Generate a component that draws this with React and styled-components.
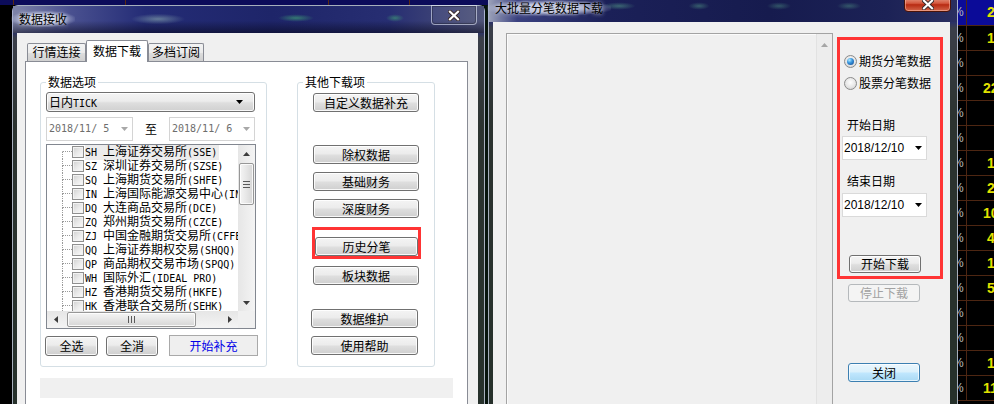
import React from "react";
import styled, { createGlobalStyle, css } from "styled-components";

const UI = `"Noto Sans CJK SC", "Liberation Sans", sans-serif`;
const MONO = `"DejaVu Sans Mono", "Liberation Mono", "Noto Sans CJK SC", monospace`;
const SANS = `"Liberation Sans", Arial, sans-serif`;

const GlobalStyle = createGlobalStyle`
  *, *::before, *::after { box-sizing: border-box; }
  html, body { margin: 0; padding: 0; background: #000; }
  body { width: 994px; height: 404px; overflow: hidden; font: 12px/16px ${UI}; color: #000; }
  #root { width: 994px; height: 404px; }
`;

/* ---------- background application ---------- */
const Desktop = styled.div`
  position: relative;
  width: 994px;
  height: 404px;
  overflow: hidden;
  display: flex;
  background: #000;
`;
const BackScreen = styled.div`
  flex: 1;
  display: flex;
  flex-direction: column;
  background: linear-gradient(90deg, #000 0 470px, #07140d 470px 490px, #000 490px);
`;
const TopBand = styled.div`
  height: 5px;
  background:
    linear-gradient(90deg, transparent 13px, #5a2a12 13px 14px, transparent 14px 125px, #5a2a12 125px 126px, transparent 126px 328px, #5a2a12 328px 329px, transparent 329px 409px, #5a2a12 409px 410px, transparent 410px),
    #0c0c5a;
`;
const Ticker = styled.div`
  width: 36px;
  display: flex;
  flex-direction: column;
  background: #000;
`;
const TickRow = styled.div`
  flex: none;
  height: ${(p) => (p.$first ? 26 : 25)}px;
  display: flex;
  border-bottom: 1px solid #4d2612;
  background: ${(p) => (p.$first ? "#0b0b98" : "#000")};
`;
const TickPct = styled.div`
  width: 9px;
  overflow: hidden;
  border-right: 1px solid #4d2612;
  color: #bdbdbd;
  font: 12px/24px ${SANS};
  white-space: nowrap;
  text-indent: -5px;
`;
const TickVal = styled.div`
  flex: 1;
  overflow: hidden;
  padding-left: 16px;
  color: #e2e200;
  font: bold 14px/24px ${SANS};
  white-space: pre;
`;

/* ---------- windows ---------- */
const Win = styled.div`
  position: absolute;
  left: ${(p) => p.$x}px;
  top: ${(p) => p.$y}px;
  width: ${(p) => p.$w}px;
  height: 440px;
  display: flex;
  flex-direction: column;
  padding: 0 ${(p) => p.$pr}px 0 ${(p) => p.$pl}px;
  border: 1px solid rgba(210, 218, 238, 0.75);
  border-radius: 6px 6px 0 0;
  background: linear-gradient(180deg, #3c4380 0, #2a3068 26px, #3b3f4a 32px, #2c3330 120px, #25302a 100%);
`;
const TitleBar = styled.div`
  flex: none;
  height: ${(p) => p.$h}px;
  display: flex;
  align-items: flex-start;
  margin: 0 -${(p) => p.$pr}px 0 -${(p) => p.$pl}px;
  padding: 0 ${(p) => p.$pr}px 0 ${(p) => p.$pl}px;
  background: ${(p) => p.$bg};
`;
const Title = styled.div`
  margin: ${(p) => p.$mt}px 0 0 -6px;
  padding: 0 8px;
  font: 12px/16px ${UI};
  color: #000;
  white-space: nowrap;
  background: radial-gradient(ellipse at center, rgba(205, 212, 236, 0.85) 35%, rgba(205, 212, 236, 0) 75%);
  text-shadow: 0 0 4px rgba(255, 255, 255, 0.9);
`;
const CloseBtn = styled.div`
  margin: ${(p) => p.$mt}px ${(p) => p.$mr}px 0 auto;
  width: ${(p) => p.$w}px;
  height: ${(p) => p.$h}px;
  display: flex;
  align-items: center;
  justify-content: center;
  border-radius: 0 0 4px 4px;
  ${(p) =>
    p.$red
      ? css`
          border: 1px solid #4a1208;
          background: linear-gradient(180deg, #e8a48f 0%, #d4583e 45%, #b82b12 55%, #d3664a 100%);
          box-shadow: inset 0 0 0 1px rgba(255, 200, 180, 0.5);
        `
      : css`
          border: 1px solid rgba(235, 240, 255, 0.55);
          background: rgba(255, 255, 255, 0.06);
          box-shadow: inset 0 0 0 1px rgba(0, 0, 0, 0.25);
        `}
`;
const Client = styled.div`
  flex: 1;
  display: flex;
  flex-direction: ${(p) => p.$dir || "column"};
  padding: ${(p) => p.$pad};
  background: #f0f0f0;
  min-height: 0;
`;

/* ---------- tabs ---------- */
const TabRow = styled.div`
  flex: none;
  height: 21px;
  display: flex;
  align-items: flex-end;
  padding-left: 2px;
`;
const Tab = styled.div`
  width: ${(p) => p.$w}px;
  height: ${(p) => (p.$active ? 22 : 18)}px;
  margin-bottom: ${(p) => (p.$active ? -1 : 0)}px;
  position: relative;
  z-index: ${(p) => (p.$active ? 1 : 0)};
  border: 1px solid #898c95;
  border-bottom: none;
  border-radius: 2px 2px 0 0;
  text-align: center;
  font: 12px/${(p) => (p.$active ? 19 : 16)}px ${UI};
  background: ${(p) =>
    p.$active ? "#fff" : "linear-gradient(180deg, #f3f3f3 0%, #ebebeb 50%, #dedede 51%, #d0d0d0 100%)"};
`;
const TabPanel = styled.div`
  width: 443px;
  flex: 1;
  display: flex;
  flex-direction: column;
  padding-left: 14px;
  background: #fff;
  border: 1px solid #898c95;
`;
const GroupRow = styled.div`
  display: flex;
  gap: 30px;
  margin-top: 13px;
  align-items: flex-start;
`;
const Group = styled.fieldset`
  width: ${(p) => p.$w}px;
  height: 292px;
  margin: 0;
  padding: 0;
  min-width: 0;
  border: 1px solid #d5dfe5;
  border-radius: 3px;
`;
const Legend = styled.legend`
  margin-left: 5px;
  padding: 0 2px;
  font: 12px/14px ${UI};
  color: #000;
`;
const GroupBody = styled.div`
  display: flex;
  flex-direction: column;
  align-items: flex-start;
  padding: ${(p) => p.$pt}px 0 0 ${(p) => p.$pl}px;
`;
const StatusBar = styled.div`
  margin-top: 11px;
  width: 413px;
  height: 20px;
  background: #f0f0f0;
`;

/* ---------- controls ---------- */
const Btn = styled.div`
  flex: none;
  display: flex;
  align-items: center;
  justify-content: center;
  width: ${(p) => p.$w}px;
  height: ${(p) => p.$h || 19}px;
  margin: ${(p) => p.$mt || 0}px 0 0 ${(p) => p.$ml || 0}px;
  border: 1px solid #707070;
  border-radius: 3px;
  background: linear-gradient(180deg, #f4f4f4 0%, #ececec 45%, #dedede 55%, #cfcfcf 100%);
  box-shadow: inset 0 0 0 1px rgba(255, 255, 255, 0.85);
  font: 12px/16px ${UI};
  color: #000;
  white-space: nowrap;
  ${(p) =>
    p.$kind === "flat" &&
    css`
      border-color: #a9a9a9;
      border-radius: 0;
      background: #efefef;
      box-shadow: none;
      color: #0000e8;
    `}
  ${(p) =>
    p.$kind === "disabled" &&
    css`
      border-color: #b5b9bc;
      background: #f4f4f4;
      box-shadow: none;
      color: #a2a2a2;
    `}
  ${(p) =>
    p.$kind === "focus" &&
    css`
      border-color: #3c7fb1;
      background: linear-gradient(180deg, #eaf6fd 0%, #dbf1fc 45%, #bfe6fd 55%, #a9d9f4 100%);
      box-shadow: inset 0 0 0 1px rgba(255, 255, 255, 0.7);
    `}
`;
const Highlight = styled.div`
  width: ${(p) => p.$w}px;
  height: ${(p) => p.$h}px;
  margin: ${(p) => p.$mt}px 0 0 ${(p) => p.$ml}px;
  padding: ${(p) => p.$pad};
  border: 3px solid #ff3434;
  display: flex;
  flex-direction: column;
  align-items: flex-start;
  flex: none;
`;
const Dropdown = styled.div`
  width: 209px;
  height: 20px;
  display: flex;
  align-items: center;
  justify-content: space-between;
  padding: 0 11px 0 2px;
  border: 1px solid #707070;
  border-radius: 3px;
  background: linear-gradient(180deg, #f4f4f4 0%, #ececec 45%, #dedede 55%, #d0d0d0 100%);
  box-shadow: inset 0 0 0 1px rgba(255, 255, 255, 0.85);
  font: 12px/16px ${UI};
`;
const Mono = styled.span`
  font: 10px/14px ${MONO};
`;
const DateRow = styled.div`
  margin-top: 5px;
  display: flex;
  align-items: center;
`;
const DateBox = styled.div`
  width: ${(p) => p.$w}px;
  height: 24px;
  display: flex;
  align-items: center;
  justify-content: space-between;
  padding: 0 ${(p) => p.$pr}px 0 ${(p) => p.$pl}px;
  border: 1px solid ${(p) => p.$border};
  background: #fff;
  color: ${(p) => p.$color};
  font: ${(p) => p.$font};
  white-space: pre;
`;
const ToLabel = styled.span`
  margin: 0 12px;
  font: 12px/16px ${UI};
`;

/* tree */
const Tree = styled.div`
  margin-top: 3px;
  width: 210px;
  height: 185px;
  display: grid;
  grid-template-columns: 1fr 17px;
  grid-template-rows: 1fr 17px;
  border: 1px solid #828790;
  background: #fff;
  overflow: hidden;
`;
const Rows = styled.div`
  overflow: hidden;
  display: flex;
  flex-direction: column;
`;
const Row = styled.div`
  flex: none;
  height: 14px;
  display: flex;
  align-items: center;
  padding-left: 15px;
  white-space: nowrap;
`;
const Branch = styled.div`
  flex: none;
  width: 10px;
  height: 14px;
  display: flex;
  flex-direction: column;
`;
const BranchTop = styled.div`
  height: 7px;
  border-left: 1px dotted ${(p) => (p.$first ? "transparent" : "#9a9a9a")};
  border-bottom: 1px dotted #9a9a9a;
`;
const BranchBottom = styled.div`
  flex: 1;
  border-left: 1px dotted #9a9a9a;
`;
const Check = styled.span`
  flex: none;
  width: 12px;
  height: 12px;
  margin-right: 1px;
  border: 1px solid #8f8f8f;
  background: linear-gradient(135deg, #cfcfcf 0%, #e9e9e9 50%, #fbfbfb 100%);
  box-shadow: inset 0 0 0 1px #f2f2f2;
`;
const ItemText = styled.span`
  padding-right: 2px;
  font: 12px/14px ${UI};
  background: ${(p) => (p.$sel ? "#ececec" : "transparent")};
`;
const VScroll = styled.div`
  display: flex;
  flex-direction: column;
  align-items: stretch;
  background: linear-gradient(90deg, #e6e6e6, #f4f4f4);
`;
const HScroll = styled.div`
  display: flex;
  align-items: stretch;
  background: linear-gradient(180deg, #e6e6e6, #f4f4f4);
`;
const ArrowBox = styled.div`
  flex: none;
  width: ${(p) => p.$w || 17}px;
  height: ${(p) => p.$h || 17}px;
  display: flex;
  align-items: center;
  justify-content: center;
  margin-top: ${(p) => (p.$end ? "auto" : 0)};
  margin-left: ${(p) => (p.$endH ? "auto" : 0)};
`;
const Thumb = styled.div`
  flex: none;
  display: flex;
  align-items: center;
  justify-content: center;
  border: 1px solid #979797;
  border-radius: 2px;
  ${(p) =>
    p.$vertical
      ? css`
          height: 42px;
          margin: 1px 1px 0 1px;
          background: linear-gradient(90deg, #f5f5f5 0%, #e6e6e6 50%, #d6d6d6 100%);
        `
      : css`
          width: 129px;
          margin: 1px 0 1px 3px;
          background: linear-gradient(180deg, #f5f5f5 0%, #e6e6e6 50%, #d6d6d6 100%);
        `}
  box-shadow: inset 0 0 0 1px rgba(255, 255, 255, 0.8);
`;
const Corner = styled.div`
  background: #f0f0f0;
`;
const BtnRow = styled.div`
  margin-top: 6px;
  display: flex;
  align-items: center;
`;

/* right window parts */
const ListBox = styled.div`
  flex: none;
  width: 327px;
  display: grid;
  grid-template-columns: 1fr 16px;
  border: 1px solid #a3a3a3;
  background: #f0f0f0;
  box-shadow: inset 1px 1px 0 #fbfbfb;
`;
const ListScroll = styled.div`
  display: flex;
  flex-direction: column;
  border-left: 1px solid #e2e2e2;
  background: #ededed;
`;
const Side = styled.div`
  flex: none;
  width: 106px;
  margin-left: 4px;
  display: flex;
  flex-direction: column;
  align-items: flex-start;
`;
const RadioRow = styled.div`
  height: 16px;
  margin-top: ${(p) => p.$mt}px;
  padding-left: 4px;
  display: flex;
  align-items: center;
  gap: 2px;
  font: 12px/16px ${UI};
  white-space: nowrap;
`;
const RadioCircle = styled.span`
  flex: none;
  width: 13px;
  height: 13px;
  border-radius: 50%;
  border: 1px solid #8a8a8a;
  background: radial-gradient(circle at 50% 40%, #fefefe 0%, #e6e6e6 55%, #c9c9c9 100%);
  display: flex;
  align-items: center;
  justify-content: center;
  &::after {
    content: "";
    display: ${(p) => (p.$on ? "block" : "none")};
    width: 7px;
    height: 7px;
    border-radius: 50%;
    background: radial-gradient(circle at 35% 30%, #b5ecff 0%, #3a98e0 40%, #0d3f88 100%);
  }
`;
const FieldLabel = styled.div`
  height: 16px;
  margin-top: ${(p) => p.$mt}px;
  padding-left: 7px;
  font: 12px/16px ${UI};
  white-space: nowrap;
`;

const Tri = ({ dir = "down", color = "#000", w = 7, h = 4 }) => {
  const horiz = dir === "left" || dir === "right";
  const vw = horiz ? h : w;
  const vh = horiz ? w : h;
  const pts = {
    down: `0,0 ${w},0 ${w / 2},${h}`,
    up: `0,${h} ${w},${h} ${w / 2},0`,
    left: `${h},0 ${h},${w} 0,${w / 2}`,
    right: `0,0 0,${w} ${h},${w / 2}`,
  }[dir];
  return (
    <svg width={vw} height={vh} viewBox={`0 0 ${vw} ${vh}`}>
      <polygon points={pts} fill={color} />
    </svg>
  );
};

const Grip = ({ vertical }) =>
  vertical ? (
    <svg width="7" height="7" viewBox="0 0 7 7">
      {[0.5, 3.5, 6.5].map((y) => (
        <line key={y} x1="0" x2="7" y1={y} y2={y} stroke="#5a5a5a" strokeWidth="1" />
      ))}
    </svg>
  ) : (
    <svg width="7" height="7" viewBox="0 0 7 7">
      {[0.5, 3.5, 6.5].map((x) => (
        <line key={x} y1="0" y2="7" x1={x} x2={x} stroke="#5a5a5a" strokeWidth="1" />
      ))}
    </svg>
  );

const XGlyph = () => (
  <svg width="12" height="11" viewBox="0 0 12 11">
    <path d="M2 1.8 L10 9.2 M10 1.8 L2 9.2" stroke="#3a2a2a" strokeWidth="4" strokeLinecap="square" />
    <path d="M2 1.8 L10 9.2 M10 1.8 L2 9.2" stroke="#fff" strokeWidth="2.2" strokeLinecap="square" />
  </svg>
);

const EXCH = [
  ["SH", "上海证券交易所", "(SSE)"],
  ["SZ", "深圳证券交易所", "(SZSE)"],
  ["SQ", "上海期货交易所", "(SHFE)"],
  ["IN", "上海国际能源交易中心", "(INE)"],
  ["DQ", "大连商品交易所", "(DCE)"],
  ["ZQ", "郑州期货交易所", "(CZCE)"],
  ["ZJ", "中国金融期货交易所", "(CFFEX)"],
  ["QQ", "上海证券期权交易", "(SHQQ)"],
  ["QP", "商品期权交易市场", "(SPQQ)"],
  ["WH", "国际外汇", "(IDEAL PRO)"],
  ["HZ", "香港期货交易所", "(HKFE)"],
  ["HK", "香港联合交易所", "(SEHK)"],
];

const TICKS = [" 2", " 1", "", "22", "", "", " 1", " 2", "10", " 4", " 1", " 5", "", "", " 1", "11"];

const LEFT_TITLE_BG = `
  radial-gradient(ellipse 36px 7px at 145px 13px, rgba(150,185,180,0.55), rgba(150,185,180,0) 75%),
  radial-gradient(ellipse 24px 5px at 283px 12px, rgba(70,190,120,0.55), rgba(70,190,120,0) 75%),
  radial-gradient(ellipse 12px 5px at 382px 12px, rgba(70,190,120,0.5), rgba(70,190,120,0) 75%),
  linear-gradient(180deg, rgba(0,0,0,0) 55%, rgba(6,6,24,0.55) 100%),
  linear-gradient(90deg, #7e84a8 0%, #4a5190 12%, #242c76 28%, #1e2569 55%, #272e72 80%, #50557a 100%)
`;
const RIGHT_TITLE_BG = `
  radial-gradient(ellipse 22px 5px at 130px 10px, rgba(90,170,140,0.5), rgba(90,170,140,0) 75%),
  radial-gradient(ellipse 14px 5px at 210px 10px, rgba(90,170,140,0.45), rgba(90,170,140,0) 75%),
  radial-gradient(ellipse 16px 5px at 290px 10px, rgba(90,170,140,0.4), rgba(90,170,140,0) 75%),
  radial-gradient(ellipse 16px 5px at 360px 10px, rgba(90,170,140,0.4), rgba(90,170,140,0) 75%),
  linear-gradient(90deg, #9aa0b8 0%, #3a4180 6%, #1b2058 25%, #161b4e 60%, #1c2256 85%, #2a2f60 100%)
`;

export default function App() {
  return (
    <>
      <GlobalStyle />
      <Desktop>
        <BackScreen>
          <TopBand />
        </BackScreen>
        <Ticker>
          {TICKS.map((v, i) => (
            <TickRow key={i} $first={i === 0}>
              <TickPct>%</TickPct>
              <TickVal>{v}</TickVal>
            </TickRow>
          ))}
        </Ticker>

        {/* 数据接收 window */}
        <Win $x={12} $y={5} $w={473} $pl={4} $pr={6}>
          <TitleBar $h={27} $pl={4} $pr={6} $bg={LEFT_TITLE_BG}>
            <Title $mt={5}>数据接收</Title>
            <CloseBtn $mt={-1} $mr={1} $w={46} $h={20}>
              <XGlyph />
            </CloseBtn>
          </TitleBar>
          <Client $pad="7px 9px 0 8px">
            <TabRow>
              <Tab $w={59}>行情连接</Tab>
              <Tab $w={62} $active>
                数据下载
              </Tab>
              <Tab $w={56}>多档订阅</Tab>
            </TabRow>
            <TabPanel>
              <GroupRow>
                <Group $w={227}>
                  <Legend>数据选项</Legend>
                  <GroupBody $pt={3} $pl={5}>
                    <Dropdown>
                      <span>
                        日内<Mono>TICK</Mono>
                      </span>
                      <Tri dir="down" color="#000" />
                    </Dropdown>
                    <DateRow>
                      <DateBox $w={87} $pl={2} $pr={4} $border="#d4d4d4" $color="#6d6d6d" $font={`10px/14px ${MONO}`}>
                        <span>2018/11/ 5</span>
                        <Tri dir="down" color="#a8a8a8" />
                      </DateBox>
                      <ToLabel>至</ToLabel>
                      <DateBox $w={86} $pl={2} $pr={4} $border="#d4d4d4" $color="#6d6d6d" $font={`10px/14px ${MONO}`}>
                        <span>2018/11/ 6</span>
                        <Tri dir="down" color="#a8a8a8" />
                      </DateBox>
                    </DateRow>
                    <Tree>
                      <Rows>
                        {EXCH.map(([code, name, tag], i) => (
                          <Row key={code}>
                            <Branch>
                              <BranchTop $first={i === 0} />
                              <BranchBottom />
                            </Branch>
                            <Check />
                            <ItemText $sel={i === 0}>
                              <Mono>{code} </Mono>
                              {name}
                              <Mono>{tag}</Mono>
                            </ItemText>
                          </Row>
                        ))}
                      </Rows>
                      <VScroll>
                        <ArrowBox>
                          <Tri dir="up" color="#3c3c3c" />
                        </ArrowBox>
                        <Thumb $vertical>
                          <Grip vertical />
                        </Thumb>
                        <ArrowBox $end>
                          <Tri dir="down" color="#3c3c3c" />
                        </ArrowBox>
                      </VScroll>
                      <HScroll>
                        <ArrowBox>
                          <Tri dir="left" color="#3c3c3c" />
                        </ArrowBox>
                        <Thumb>
                          <Grip />
                        </Thumb>
                        <ArrowBox $endH>
                          <Tri dir="right" color="#3c3c3c" />
                        </ArrowBox>
                      </HScroll>
                      <Corner />
                    </Tree>
                    <BtnRow>
                      <Btn $w={53} $h={20} $ml={-1}>
                        全选
                      </Btn>
                      <Btn $w={52} $h={20} $ml={8}>
                        全消
                      </Btn>
                      <Btn $w={89} $h={21} $ml={11} $kind="flat">
                        开始补充
                      </Btn>
                    </BtnRow>
                  </GroupBody>
                </Group>
                <Group $w={138}>
                  <Legend>其他下载项</Legend>
                  <GroupBody $pt={0} $pl={15}>
                    <Btn $w={106} $mt={4}>
                      自定义数据补充
                    </Btn>
                    <Btn $w={106} $mt={33}>
                      除权数据
                    </Btn>
                    <Btn $w={106} $mt={8}>
                      基础财务
                    </Btn>
                    <Btn $w={106} $mt={8}>
                      深度财务
                    </Btn>
                    <Highlight $w={109} $h={32} $mt={9} $ml={-1} $pad="7px 0 0 0">
                      <Btn $w={103}>历史分笔</Btn>
                    </Highlight>
                    <Btn $w={106} $mt={7}>
                      板块数据
                    </Btn>
                    <Btn $w={107} $mt={24} $ml={-2}>
                      数据维护
                    </Btn>
                    <Btn $w={107} $mt={8} $ml={-2}>
                      使用帮助
                    </Btn>
                  </GroupBody>
                </Group>
              </GroupRow>
              <StatusBar />
            </TabPanel>
          </Client>
        </Win>

        {/* 大批量分笔数据下载 window */}
        <Win $x={488} $y={-5} $w={470} $pl={4} $pr={7}>
          <TitleBar $h={26} $pl={4} $pr={7} $bg={RIGHT_TITLE_BG}>
            <Title $mt={4}>大批量分笔数据下载</Title>
            <CloseBtn $red $mt={0} $mr={-1} $w={47} $h={16}>
              <XGlyph />
            </CloseBtn>
          </TitleBar>
          <Client $dir="row" $pad="11px 7px 0 13px">
            <ListBox>
              <div />
              <ListScroll>
                <ArrowBox $w={15} $h={22}>
                  <Tri dir="up" color="#a6a6a6" />
                </ArrowBox>
              </ListScroll>
            </ListBox>
            <Side>
              <Highlight $w={106} $h={242} $mt={4} $ml={0} $pad="0">
                <RadioRow $mt={13}>
                  <RadioCircle $on />
                  期货分笔数据
                </RadioRow>
                <RadioRow $mt={6}>
                  <RadioCircle />
                  股票分笔数据
                </RadioRow>
                <FieldLabel $mt={26}>开始日期</FieldLabel>
                <div style={{ marginTop: 3, marginLeft: 2 }}>
                  <DateBox $w={85} $pl={1} $pr={4} $border="#dadada" $color="#000" $font={`12px/16px ${SANS}`}>
                    <span>2018/12/10</span>
                    <Tri dir="down" color="#000" />
                  </DateBox>
                </div>
                <FieldLabel $mt={13}>结束日期</FieldLabel>
                <div style={{ marginTop: 4, marginLeft: 2 }}>
                  <DateBox $w={85} $pl={1} $pr={4} $border="#dadada" $color="#000" $font={`12px/16px ${SANS}`}>
                    <span>2018/12/10</span>
                    <Tri dir="down" color="#000" />
                  </DateBox>
                </div>
                <Btn $w={72} $h={18} $mt={38} $ml={9}>
                  开始下载
                </Btn>
              </Highlight>
              <Btn $w={72} $h={18} $mt={5} $ml={11} $kind="disabled">
                停止下载
              </Btn>
              <Btn $w={72} $h={19} $mt={61} $ml={11} $kind="focus">
                关闭
              </Btn>
            </Side>
          </Client>
        </Win>
      </Desktop>
    </>
  );
}
